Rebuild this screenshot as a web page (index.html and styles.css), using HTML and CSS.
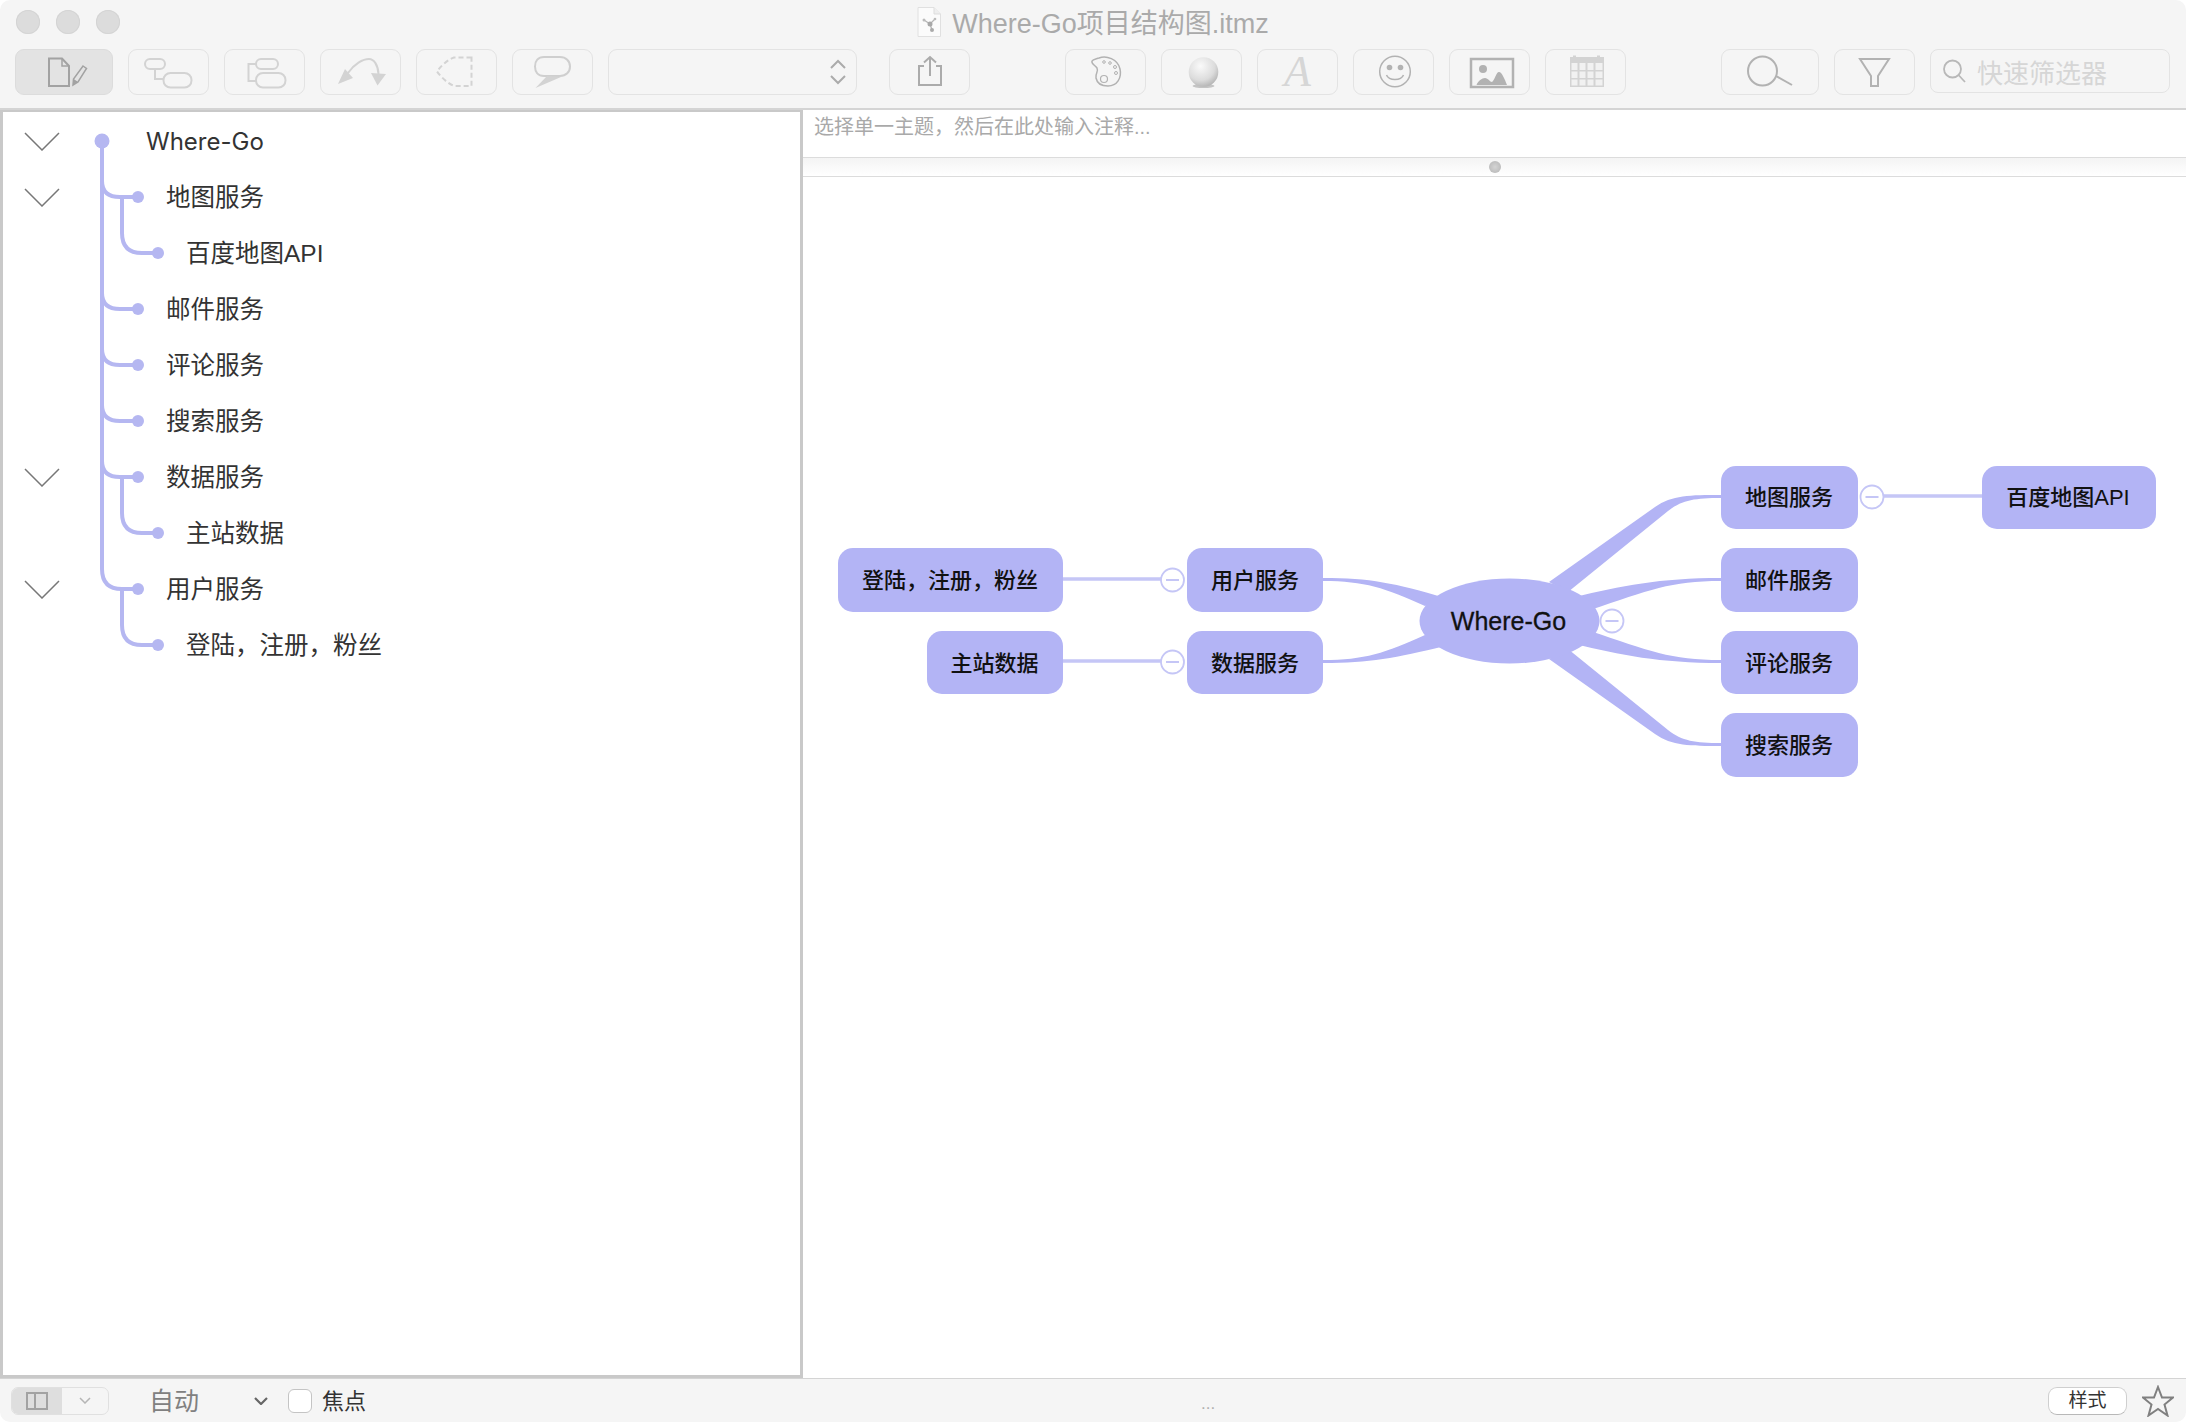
FILE: index.html
```html
<!DOCTYPE html>
<html lang="zh-CN">
<head>
    <meta charset="UTF-8">
    <title>Where-Go项目结构图.itmz</title>
    <link rel="stylesheet" href="styles.css">
</head>
<body>
<div class="window">

    <!-- Title bar -->
    <div class="titlebar">
        <div class="lights">
            <span class="light"></span>
            <span class="light"></span>
            <span class="light"></span>
        </div>
        <div class="title">
            <svg class="file-icon" viewBox="0 0 24 30">
                <path d="M1 .5H17L23.500 7V29.500H1Z" fill="#fbfbfb" stroke="#e0e0e0"/>
                <path d="M17 .5V7H23.500" fill="#eee" stroke="#ddd"/>
                <path d="M7 13L13 17L18 12M13 17L15 23" stroke="#b5b5b5" stroke-width="1.300" fill="none"/>
                <circle cx="13" cy="17" r="2.500" fill="#a8a8a8"/>
                <circle cx="7" cy="13" r="1.500" fill="#bbb"/>
                <circle cx="18" cy="12" r="1.300" fill="#bbb"/>
                <circle cx="15" cy="23" r="2" fill="#aaa"/>
            </svg>
            <span>Where-Go项目结构图.itmz</span>
        </div>
        <div></div>
    </div>

    <!-- Toolbar -->
    <div class="toolbar">
        <div class="tool tool-wide tool-active">
            <svg viewBox="0 0 98 46">
                <path d="M34 9.500H47L54 17V37H34Z" fill="none" stroke="#a2a2a2" stroke-width="2"/>
                <path d="M47 9.500V17H54" fill="none" stroke="#a2a2a2" stroke-width="1.500"/>
                <path d="M68 17L71.500 19.500L63 33L58 36L58.500 30Z" fill="none" stroke="#a2a2a2" stroke-width="1.500"/>
                <path d="M58 36L58.500 30L62.500 32.500Z" fill="#a2a2a2"/>
            </svg>
        </div>
        <div class="tool">
            <svg viewBox="0 0 81 46" fill="none" stroke="#d3d3d3" stroke-width="2">
                <rect x="17" y="10" width="20" height="10" rx="5"/>
                <rect x="35.500" y="24" width="28" height="14.500" rx="7"/>
                <path d="M27 20V30H35.500"/>
            </svg>
        </div>
        <div class="tool">
            <svg viewBox="0 0 81 46" fill="none" stroke="#d3d3d3" stroke-width="2">
                <rect x="32" y="10" width="22" height="10" rx="5"/>
                <rect x="32" y="24" width="29.500" height="14.500" rx="7"/>
                <path d="M32 15H24.500V32H32"/>
            </svg>
        </div>
        <div class="tool">
            <svg viewBox="0 0 81 46">
                <path d="M28 24C34 15 43 10 49 10C54 10 58 16 58.500 25" fill="none" stroke="#d3d3d3" stroke-width="2"/>
                <path d="M18 35L25 20L33 29Z" fill="#d3d3d3"/>
                <path d="M66 25L57.500 36.500L51 24Z" fill="#d3d3d3"/>
            </svg>
        </div>
        <div class="tool">
            <svg viewBox="0 0 81 46">
                <path d="M55.500 8.500H38C31 11 25 17 21 22.500C25 28 31 34 38 37H55.500Z" fill="none" stroke="#d3d3d3" stroke-width="2" stroke-dasharray="5 3"/>
            </svg>
        </div>
        <div class="tool">
            <svg viewBox="0 0 81 46">
                <path d="M32 8H48C54 8 58 12 58 17.500C58 23 54 27 48 27H32C26 27 23 23 23 17.500C23 12 26 8 32 8Z" fill="none" stroke="#cfcfcf" stroke-width="2"/>
                <path d="M35 27L23.500 39L49 28Z" fill="#d3d3d3"/>
            </svg>
        </div>
        <div class="tool tool-select">
            <svg class="updown" viewBox="0 0 18 28" fill="none" stroke="#ababab" stroke-width="2">
                <path d="M2 10L9 3L16 10"/>
                <path d="M2 18L9 25L16 18"/>
            </svg>
        </div>
        <div class="tool group-gap-sm">
            <svg viewBox="0 0 81 46" fill="none" stroke="#ababab" stroke-width="2">
                <path d="M35 17H30V36H52V17H47"/>
                <path d="M41 27V8M35 13.500L41 8L47 13.500"/>
            </svg>
        </div>
        <div class="tool group-gap">
            <svg viewBox="0 0 81 46">
                <g transform="translate(25 7)" fill="none" stroke="#b2b2b2" stroke-width="1.500">
                    <path d="M9 2C16 -1 28 3 30 13C32 22 27 30 18 30C11 30 7 27 6 22C5 17 9 16 7 12C5 9 1 8 2 5C3 3 6 3 9 2Z"/>
                    <circle cx="14" cy="6" r="1.300" stroke-width="1"/>
                    <circle cx="20" cy="7" r="1.300" stroke-width="1"/>
                    <circle cx="25" cy="11" r="1.500" stroke-width="1"/>
                    <circle cx="26" cy="17" r="1.500" stroke-width="1"/>
                    <circle cx="14" cy="23" r="3.500" stroke-width="1.200"/>
                </g>
            </svg>
        </div>
        <div class="tool">
            <svg viewBox="0 0 81 46">
                <defs>
                    <radialGradient id="ball" cx="0.4" cy="0.3" r="0.8">
                        <stop offset="0" stop-color="#fafafa"/>
                        <stop offset="0.6" stop-color="#dcdcdc"/>
                        <stop offset="1" stop-color="#a8a8a8"/>
                    </radialGradient>
                </defs>
                <ellipse cx="42.500" cy="37" rx="11" ry="2" fill="#c4c4c4"/>
                <circle cx="42.500" cy="23" r="14.800" fill="url(#ball)"/>
            </svg>
        </div>
        <div class="tool tool-letter">A</div>
        <div class="tool">
            <svg viewBox="0 0 81 46">
                <circle cx="42" cy="22.500" r="15.300" fill="none" stroke="#b2b2b2" stroke-width="1.500"/>
                <circle cx="36.500" cy="18.500" r="2.800" fill="#b2b2b2"/>
                <circle cx="47.500" cy="18.500" r="2.800" fill="#b2b2b2"/>
                <path d="M33.500 26C36 32 48 32 50.500 26" fill="none" stroke="#b2b2b2" stroke-width="1.500"/>
            </svg>
        </div>
        <div class="tool">
            <svg viewBox="0 0 81 46">
                <rect x="22" y="10" width="42" height="28" fill="none" stroke="#b2b2b2" stroke-width="2.500"/>
                <circle cx="34" cy="20" r="4" fill="#b2b2b2"/>
                <path d="M27.500 36C29 32 33 29 36 29C39 29 41 33 43 33C46 31 47 23 50 23C53 23 56 31 58 36Z" fill="#b2b2b2"/>
            </svg>
        </div>
        <div class="tool">
            <svg viewBox="0 0 81 46">
                <rect x="25" y="8" width="34" height="30" fill="#d3d3d3"/>
                <rect x="28" y="6.500" width="3" height="3" fill="#d3d3d3"/>
                <rect x="52" y="6.500" width="3" height="3" fill="#d3d3d3"/>
                <g fill="#f1f1f1">
                    <rect x="26.500" y="14" width="6" height="7"/>
                    <rect x="34.500" y="14" width="6" height="7"/>
                    <rect x="42.500" y="14" width="6" height="7"/>
                    <rect x="50.500" y="14" width="7" height="7"/>
                    <rect x="26.500" y="22.500" width="6" height="6.500"/>
                    <rect x="34.500" y="22.500" width="6" height="6.500"/>
                    <rect x="42.500" y="22.500" width="6" height="6.500"/>
                    <rect x="50.500" y="22.500" width="7" height="6.500"/>
                    <rect x="26.500" y="30.500" width="6" height="6"/>
                    <rect x="34.500" y="30.500" width="6" height="6"/>
                    <rect x="42.500" y="30.500" width="6" height="6"/>
                    <rect x="50.500" y="30.500" width="7" height="6"/>
                </g>
            </svg>
        </div>
        <div class="tool tool-wide group-gap">
            <svg viewBox="0 0 98 46" fill="none" stroke="#b2b2b2" stroke-width="2">
                <circle cx="41.500" cy="22" r="14.500"/>
                <path d="M55 27L71 36"/>
            </svg>
        </div>
        <div class="tool">
            <svg viewBox="0 0 81 46" fill="none" stroke="#b2b2b2" stroke-width="2">
                <path d="M26 10H55L44 27V37H37V27Z"/>
            </svg>
        </div>
        <div class="filter-box">
            <svg class="filter-glass" viewBox="0 0 24 24" fill="none" stroke="#b8b8b8" stroke-width="1.800">
                <circle cx="10.500" cy="10" r="8.500"/>
                <path d="M16.500 16L23 23"/>
            </svg>
            <span>快速筛选器</span>
        </div>
    </div>

    <!-- Outline + map -->
    <div class="main">
        <div class="outline">
            <div class="tree">
                <svg class="tree-lines" viewBox="0 0 200 560" fill="none" stroke="#b5b7f1" stroke-width="4">
                    <path d="M99 28V456Q99 476 119 476H135"/>
                    <path d="M99 68Q99 84 117 84H135"/>
                    <path d="M99 180Q99 196 117 196H135"/>
                    <path d="M99 236Q99 252 117 252H135"/>
                    <path d="M99 292Q99 308 117 308H135"/>
                    <path d="M99 348Q99 364 117 364H135"/>
                    <path d="M119 84V120Q119 140 139 140H155"/>
                    <path d="M119 364V400Q119 420 139 420H155"/>
                    <path d="M119 476V512Q119 532 139 532H155"/>
                    <g fill="#b5b7f1" stroke="none">
                        <circle cx="99" cy="28" r="7.500"/>
                        <circle cx="135" cy="84" r="6"/>
                        <circle cx="155" cy="140" r="6"/>
                        <circle cx="135" cy="196" r="6"/>
                        <circle cx="135" cy="252" r="6"/>
                        <circle cx="135" cy="308" r="6"/>
                        <circle cx="135" cy="364" r="6"/>
                        <circle cx="155" cy="420" r="6"/>
                        <circle cx="135" cy="476" r="6"/>
                        <circle cx="155" cy="532" r="6"/>
                    </g>
                </svg>
                <div class="row">
                    <svg class="chev" viewBox="0 0 36 19"><path d="M1 1L18 18L35 1"/></svg>
                    <span class="label level-0">Where-Go</span>
                </div>
                <div class="row">
                    <svg class="chev" viewBox="0 0 36 19"><path d="M1 1L18 18L35 1"/></svg>
                    <span class="label level-1">地图服务</span>
                </div>
                <div class="row"><span class="chev"></span><span class="label level-2">百度地图API</span></div>
                <div class="row"><span class="chev"></span><span class="label level-1">邮件服务</span></div>
                <div class="row"><span class="chev"></span><span class="label level-1">评论服务</span></div>
                <div class="row"><span class="chev"></span><span class="label level-1">搜索服务</span></div>
                <div class="row">
                    <svg class="chev" viewBox="0 0 36 19"><path d="M1 1L18 18L35 1"/></svg>
                    <span class="label level-1">数据服务</span>
                </div>
                <div class="row"><span class="chev"></span><span class="label level-2">主站数据</span></div>
                <div class="row">
                    <svg class="chev" viewBox="0 0 36 19"><path d="M1 1L18 18L35 1"/></svg>
                    <span class="label level-1">用户服务</span>
                </div>
                <div class="row"><span class="chev"></span><span class="label level-2">登陆，注册，粉丝</span></div>
            </div>
        </div>

        <div class="editor">
            <div class="note">选择单一主题，然后在此处输入注释...</div>
            <div class="splitter"><span class="split-dot"></span></div>
            <div class="canvas">
                <!-- viewBox uses window coordinates, easier to read against the layout -->
                <svg class="map" viewBox="803 177 1383 1201">
                    <g fill="#b3b4f5">
                        <path d="M1549 582L1655 507C1672 495 1690 495 1721 495L1721 498C1695 498 1682 500 1668 511L1568 592Z"/>
                        <path d="M1549 659L1655 734C1672 746 1690 746 1721 746L1721 743C1695 743 1682 741 1668 730L1568 649Z"/>
                        <path d="M1575 597C1620 586 1660 578 1721 578L1721 581C1670 581 1650 590 1590 610Z"/>
                        <path d="M1575 644C1620 655 1660 663 1721 663L1721 660C1670 660 1650 651 1590 631Z"/>
                        <path d="M1323 578C1370 578 1395 583 1445 598L1425 606C1385 588 1365 581 1323 581Z"/>
                        <path d="M1323 660C1365 660 1385 653 1425 635L1445 646C1395 658 1370 663 1323 663Z"/>
                        <ellipse cx="1509.500" cy="621" rx="90" ry="42.500"/>
                    </g>
                    <g stroke="#c5c6f6" stroke-width="3.500" fill="none">
                        <path d="M1063 579H1162"/>
                        <path d="M1063 661H1162"/>
                        <path d="M1882 496H1982"/>
                    </g>

                    <g fill="#b3b4f5">
                        <rect x="838" y="548" width="225" height="64" rx="15"/>
                        <rect x="927" y="631" width="136" height="63" rx="15"/>
                        <rect x="1187" y="548" width="136" height="64" rx="15"/>
                        <rect x="1187" y="631" width="136" height="63" rx="15"/>
                        <rect x="1721" y="466" width="137" height="63" rx="15"/>
                        <rect x="1982" y="466" width="174" height="63" rx="15"/>
                        <rect x="1721" y="548" width="137" height="64" rx="15"/>
                        <rect x="1721" y="631" width="137" height="63" rx="15"/>
                        <rect x="1721" y="713" width="137" height="64" rx="15"/>
                    </g>

                    <g fill="#fff" stroke="#c5c6f6" stroke-width="1.800">
                        <circle cx="1172.500" cy="580" r="11.500"/>
                        <circle cx="1172.500" cy="662" r="11.500"/>
                        <circle cx="1612" cy="621" r="11.500"/>
                        <circle cx="1872" cy="497" r="11.500"/>
                    </g>
                    <g stroke="#c5c6f6" stroke-width="2">
                        <path d="M1166 580H1179M1166 662H1179M1605.500 621H1618.500M1865.500 497H1878.500"/>
                    </g>

                    <g class="map-text">
                        <text x="950" y="580">登陆，注册，粉丝</text>
                        <text x="994.500" y="663">主站数据</text>
                        <text x="1255" y="580">用户服务</text>
                        <text x="1255" y="663">数据服务</text>
                        <text x="1789" y="497">地图服务</text>
                        <text x="2068" y="497">百度地图API</text>
                        <text x="1789" y="580">邮件服务</text>
                        <text x="1789" y="663">评论服务</text>
                        <text x="1789" y="745">搜索服务</text>
                        <text class="map-root" x="1508.500" y="621">Where-Go</text>
                    </g>
                </svg>
            </div>
        </div>
    </div>

    <!-- Status bar -->
    <div class="statusbar">
        <div class="seg">
            <div class="seg-on">
                <svg viewBox="0 0 22 18" fill="none" stroke="#a2a2a2" stroke-width="2">
                    <rect x="1" y="1" width="20" height="16"/>
                    <path d="M9 1V17"/>
                </svg>
            </div>
            <div class="seg-off">
                <svg viewBox="0 0 12 7" fill="none" stroke="#b5b5b5" stroke-width="1.500"><path d="M1 1L6 6L11 1"/></svg>
            </div>
        </div>
        <span class="auto">自动</span>
        <svg class="auto-chev" viewBox="0 0 14 8" fill="none" stroke="#666" stroke-width="2.200"><path d="M1 1L7 7L13 1"/></svg>
        <span class="check"></span>
        <span class="check-label">焦点</span>
        <span class="dots">...</span>
        <span class="style-btn">样式</span>
        <svg class="star" viewBox="0 0 32 32" fill="none" stroke="#808080" stroke-width="2">
            <path d="M16 2L20 12.500H31L22.500 19.500L25.500 30.500L16 24L6.500 30.500L9.500 19.500L1 12.500H12Z"/>
        </svg>
    </div>
</div>
</body>
</html>
```

FILE: styles.css
```css
:root {
    --ui-font: "Liberation Sans", "Noto Sans CJK SC", sans-serif;
    --bar-color: #f5f5f5;
    --tool-border: #e3e3e3;
    --panel-border: #c9c9c9;
    --topic-color: #b3b4f5;
}

html, body {
    margin: 0;
    height: 100%;
    background: #fff;
    overflow: hidden;
}

.window {
    height: 1422px;
    display: flex;
    flex-direction: column;
    border-radius: 10px;
    overflow: hidden;
    font-family: var(--ui-font);
    color: #333;
}

/* title bar */
.titlebar {
    height: 49px;
    flex: none;
    display: grid;
    grid-template-columns: 1fr auto 1fr;
    align-items: center;
    background: var(--bar-color);
}

.lights {
    display: flex;
    gap: 16px;
    padding-left: 16px;
    padding-bottom: 5px;
}

.light {
    width: 24px;
    height: 24px;
    border-radius: 50%;
    background: #dcdcdc;
    box-shadow: inset 0 0 0 1px #d4d4d4;
}

.title {
    display: flex;
    align-items: center;
    gap: 11px;
    padding-bottom: 6px;
    font-size: 27px;
    color: #aaa;
}

.file-icon {
    width: 24px;
    height: 30px;
}

/* toolbar */
.toolbar {
    height: 59px;
    flex: none;
    box-sizing: content-box;
    display: flex;
    align-items: flex-start;
    gap: 15px;
    padding-left: 15px;
    background: var(--bar-color);
    border-bottom: 2px solid #d4d4d4;
}

.tool {
    width: 81px;
    height: 46px;
    flex: none;
    box-sizing: border-box;
    border: 1.5px solid var(--tool-border);
    border-radius: 9px;
}

.tool svg {
    display: block;
    width: 81px;
    height: 46px;
    margin: -1.5px;
}

.tool-wide {
    width: 98px;
}

.tool-wide svg {
    width: 98px;
}

.tool-active {
    background: #e3e3e3;
    border-color: #dcdcdc;
}

.tool-select {
    width: 249px;
    display: flex;
    justify-content: flex-end;
    align-items: center;
    padding-right: 9px;
}

.tool-select svg.updown {
    width: 18px;
    height: 28px;
    margin: 0;
}

.tool-letter {
    font-family: "Liberation Serif", serif;
    font-style: italic;
    font-size: 44px;
    line-height: 44px;
    text-align: center;
    color: #d6d6d6;
}

.group-gap-sm {
    margin-left: 17px;
}

.group-gap {
    margin-left: 80px;
}

.filter-box {
    width: 240px;
    height: 44px;
    box-sizing: border-box;
    border: 1.5px solid var(--tool-border);
    border-radius: 8px;
    display: flex;
    align-items: center;
    gap: 11px;
    padding-left: 11px;
    font-size: 26px;
    color: #d6d6d6;
}

.filter-glass {
    width: 24px;
    height: 24px;
}

/* main area */
.main {
    flex: 1;
    min-height: 0;
    display: flex;
}

.outline {
    width: 803px;
    flex: none;
    box-sizing: border-box;
    border: 3px solid var(--panel-border);
    border-top-width: 2px;
    padding-top: 1px;
    background: #fff;
}

.tree {
    position: relative;
}

.tree-lines {
    position: absolute;
    left: 0;
    top: 0;
    width: 200px;
    height: 560px;
}

.row {
    height: 56px;
    display: flex;
    align-items: center;
    padding-left: 21px;
    font-size: 24.5px;
    color: #333;
}

.chev {
    width: 36px;
    height: 19px;
    flex: none;
    fill: none;
    stroke: #777;
    stroke-width: 1.500;
}

.label {
    position: relative;
    padding-bottom: 4px;
}

.level-0 {
    margin-left: 86px;
    padding-bottom: 0;
    font-size: 24px;
    font-family: Inter, "Noto Sans CJK SC", sans-serif;
}

.level-1 {
    margin-left: 106px;
}

.level-2 {
    margin-left: 126px;
}

.editor {
    flex: 1;
    min-width: 0;
    display: flex;
    flex-direction: column;
}

.note {
    height: 46px;
    flex: none;
    padding: 1px 0 0 11px;
    box-sizing: content-box;
    font-size: 20px;
    line-height: 33px;
    color: #a9a9a9;
    border-bottom: 1.5px solid #dcdcdc;
}

.splitter {
    height: 18px;
    flex: none;
    display: flex;
    align-items: center;
    justify-content: center;
    background: linear-gradient(#f4f4f4, #fff);
    border-bottom: 1.5px solid #dcdcdc;
}

.split-dot {
    width: 12px;
    height: 12px;
    border-radius: 50%;
    background: radial-gradient(#d4d4d4, #b4b4b4);
}

.canvas {
    flex: 1;
    min-height: 0;
    background: #fff;
}

.map {
    display: block;
    width: 100%;
    height: 100%;
}

.map-text text {
    font-family: var(--ui-font);
    font-size: 22px;
    font-weight: 500;
    fill: #111;
    text-anchor: middle;
    dominant-baseline: central;
}

.map-text .map-root {
    font-size: 25px;
    stroke: #111;
    stroke-width: 0.3;
}

/* status bar */
.statusbar {
    height: 43px;
    flex: none;
    display: flex;
    align-items: center;
    padding: 0 12px 0 11px;
    background: var(--bar-color);
    border-top: 1px solid #d4d4d4;
}

.seg {
    width: 98px;
    height: 28px;
    display: flex;
    box-sizing: border-box;
    border: 1px solid #e0e0e0;
    border-radius: 7px;
    overflow: hidden;
}

.seg-on {
    width: 50px;
    background: #dedede;
    display: flex;
    align-items: center;
    justify-content: center;
}

.seg-on svg {
    width: 22px;
    height: 18px;
}

.seg-off {
    flex: 1;
    display: flex;
    align-items: center;
    justify-content: center;
}

.seg-off svg {
    width: 12px;
    height: 7px;
}

.auto {
    margin-left: 40px;
    padding-bottom: 3px;
    font-size: 25px;
    color: #808080;
}

.auto-chev {
    width: 14px;
    height: 8px;
    margin-left: 55px;
}

.check {
    width: 24px;
    height: 24px;
    margin-left: 20px;
    box-sizing: border-box;
    background: #fff;
    border: 1px solid #c4c4c4;
    border-radius: 6px;
}

.check-label {
    margin-left: 10px;
    padding-bottom: 3px;
    font-size: 22px;
    color: #333;
}

.dots {
    margin-left: 835px;
    font-size: 17px;
    color: #b0b0b0;
    padding-top: 6px;
}

.style-btn {
    margin-left: auto;
    width: 79px;
    height: 28px;
    box-sizing: border-box;
    background: #fff;
    border: 1px solid #cfcfcf;
    border-bottom-color: #b8b8b8;
    border-radius: 9px;
    font-size: 19px;
    line-height: 26px;
    text-align: center;
    color: #333;
}

.star {
    width: 32px;
    height: 32px;
    margin-left: 15px;
}
```
